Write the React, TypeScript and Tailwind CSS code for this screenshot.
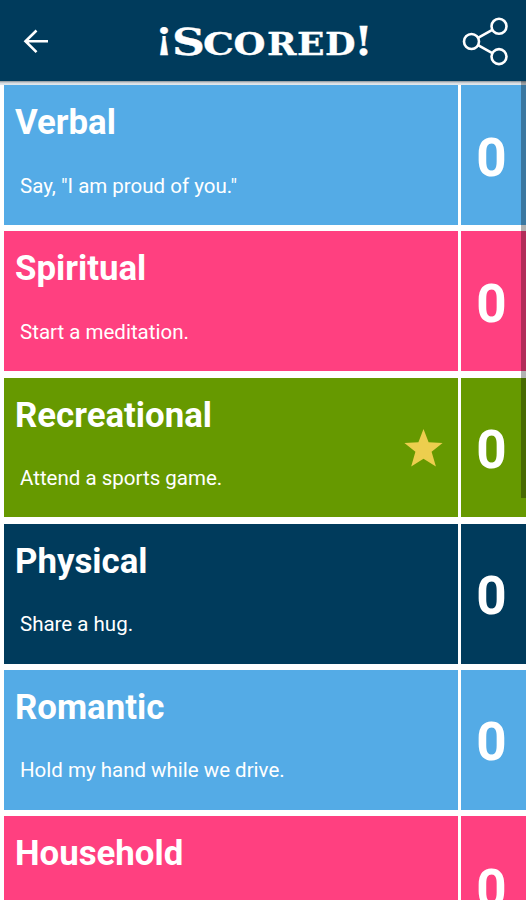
const rows = [
  { title: 'Verbal', tip: 'Say, "I am proud of you."', color: 'bg-[#54ABE6]' },
  { title: 'Spiritual', tip: 'Start a meditation.', color: 'bg-[#FF4080]' },
  { title: 'Recreational', tip: 'Attend a sports game.', color: 'bg-[#669900]', star: true },
  { title: 'Physical', tip: 'Share a hug.', color: 'bg-[#003B5C]' },
  { title: 'Romantic', tip: 'Hold my hand while we drive.', color: 'bg-[#54ABE6]' },
  { title: 'Household', color: 'bg-[#FF4080]' },
];

const letters = [
  { char: '¡', x: 155, y: 47.5, size: 38, width: 18 },
  { char: 'S', x: 172, y: 54.6, size: 37.5, width: 33 },
  { char: 'C', x: 203, y: 54.6, size: 31, width: 31 },
  { char: 'O', x: 233.5, y: 54.6, size: 31, width: 32 },
  { char: 'R', x: 267, y: 54.8, size: 32, width: 29.5 },
  { char: 'E', x: 297, y: 54.8, size: 32, width: 27.5 },
  { char: 'D', x: 325, y: 54.8, size: 32, width: 30.5 },
  { char: '!', x: 354.5, y: 54.8, size: 38.5, width: 18 },
];

function Logo() {
  return (
    <svg className="mr-auto ml-[104px] h-[60px] w-[220px]" viewBox="154 11 220 60" fill="white" stroke="white" strokeWidth="0.3" fontFamily="'DejaVu Serif', serif" fontWeight="bold">
      {letters.map((l) => (
        <text key={l.char} x={l.x} y={l.y} fontSize={l.size} textLength={l.width} lengthAdjust="spacingAndGlyphs">
          {l.char}
        </text>
      ))}
    </svg>
  );
}

export default function App() {
  return (
    <div className="relative flex h-[900px] w-[526px] flex-col overflow-hidden bg-white font-['Roboto',sans-serif] text-white">
      <header className="flex h-[81px] shrink-0 items-center bg-[#003B5C] pr-[16px] pl-[22px]">
        <svg className="h-[28px] w-[28px]" viewBox="22 27 28 28" fill="none" stroke="white" strokeWidth="2.6">
          <path d="M48 41.2H25.5M36.5 30.5L25.5 41.2L36.5 52.2" />
        </svg>
        <Logo />
        <svg className="h-[52px] w-[50px]" viewBox="460 15 50 52" fill="none" stroke="white" strokeWidth="2.6">
          <circle cx="471.5" cy="41.5" r="7.5" />
          <circle cx="499" cy="26.3" r="7.5" />
          <circle cx="499" cy="56.6" r="7.5" />
          <path d="M478 37.8L492.3 29.8M478 45.2L492.3 53.2" />
        </svg>
      </header>
      <div className="h-[4.3px] shrink-0 bg-linear-to-b from-[#8B9299] via-[#D4DADF] to-[#E4EAEF]" />
      <main className="flex flex-col gap-[6.4px] pl-1">
        {rows.map((row) => (
          <section key={row.title} className="flex h-[139.8px] shrink-0 gap-[3.5px]">
            <div className={`flex w-[453.5px] items-center justify-between pr-[15px] ${row.color}`}>
              <div className="flex h-full flex-col">
                <h2 className="mt-[16px] ml-[11px] text-[34.8px] leading-[42px] font-bold">{row.title}</h2>
                {row.tip && <p className="mt-[30.3px] ml-[16px] text-[20.5px] leading-[24px]">{row.tip}</p>}
              </div>
              {row.star && (
                <svg className="h-[38px] w-[39px]" viewBox="0 0 39 38" fill="#EDCE4E">
                  <path d="M19.5 0L24.6 13.2L38.6 14L27.6 22.8L31.9 37.4L19.5 29.7L7.2 37.4L11.4 22.8L.4 14L14.4 13.2Z" />
                </svg>
              )}
            </div>
            <div className={`flex flex-1 items-center justify-center pt-[6px] pr-[4px] text-[53px] leading-none font-bold ${row.color}`}>0</div>
          </section>
        ))}
      </main>
      <div className="absolute top-[81px] right-0 h-[417px] w-[5.5px] bg-black/30" />
    </div>
  );
}
